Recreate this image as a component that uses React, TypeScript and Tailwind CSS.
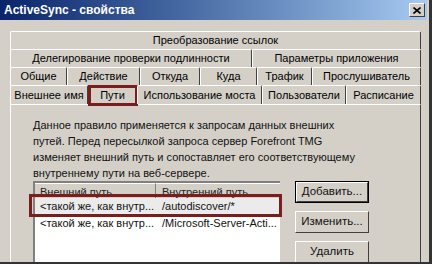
import React from 'react';

const tabRow = 'flex h-[18px] shrink-0';
const tab =
  'relative flex items-center justify-center border-t border-l border-white border-r border-r-[#404040] rounded-t-[2px] text-black whitespace-nowrap';

const Tab: React.FC<{ label: string; w?: string; marked?: boolean }> = ({ label, w, marked }) => (
  <div className={`${tab} ${w ?? 'flex-1'}`}>
    {label}
    {marked && (
      <span className="absolute left-[-1px] right-[-2px] top-[-1px] bottom-[-2px] border-[3px] border-[#7b1d1d]" />
    )}
  </div>
);

const Button: React.FC<{ label: string; primary?: boolean }> = ({ label, primary }) => (
  <div
    className={`h-[22px] w-[74px] flex items-center justify-center bg-[#d4d0c8] ${
      primary ? 'border border-black' : ''
    }`}
  >
    <div className="w-full h-full flex items-center justify-center border-t border-l border-white border-r border-b border-r-[#404040] border-b-[#404040] text-[11.5px]">
      {label}
    </div>
  </div>
);

export default function App() {
  return (
    <div className="w-[435px] h-[267px] bg-white overflow-hidden font-['Liberation_Sans',Arial,sans-serif] text-[11px] leading-none text-[#111]">
      <div className="w-[432px] h-[264px] bg-[#d4d0c8] border-r-[3px] border-b-[2px] border-[#333] flex flex-col overflow-hidden">
        {/* title bar */}
        <div className="h-[20px] mr-[2px] shrink-0 flex items-center justify-between bg-gradient-to-r from-[#0a246a] to-[#a6caf0] pl-[4px] pr-[2px]">
          <span className="text-white font-bold text-[12px]">ActiveSync - свойства</span>
          <div className="w-[16px] h-[14px] bg-[#d4d0c8] border-t border-l border-white border-r border-b border-r-[#404040] border-b-[#404040] flex items-center justify-center">
            <svg width="8" height="7" viewBox="0 0 8 7">
              <path d="M0.5 0.5 L7.5 6.5 M7.5 0.5 L0.5 6.5" stroke="black" strokeWidth="1.6" />
            </svg>
          </div>
        </div>

        {/* tabs */}
        <div className="flex flex-col pl-[10px] pr-[8px] pt-[11px] flex-1 min-h-0">
          <div className={tabRow}>
            <Tab label="Преобразование ссылок" />
          </div>
          <div className={tabRow}>
            <Tab label="Делегирование проверки подлинности" w="w-[242px]" />
            <Tab label="Параметры приложения" />
          </div>
          <div className={tabRow}>
            <Tab label="Общие" w="w-[57px]" />
            <Tab label="Действие" w="w-[73px]" />
            <Tab label="Откуда" w="w-[60px]" />
            <Tab label="Куда" w="w-[57px]" />
            <Tab label="Трафик" w="w-[55px]" />
            <Tab label="Прослушиватель" />
          </div>
          <div className={`${tabRow} h-[19px]`}>
            <Tab label="Внешнее имя" w="w-[78px]" />
            <Tab label="Пути" w="w-[49px]" marked />
            <Tab label="Использование моста" w="w-[125px]" />
            <Tab label="Пользователи" w="w-[84px]" />
            <Tab label="Расписание" />
          </div>

          {/* panel */}
          <div className="flex-1 flex flex-col border-t border-l border-white border-r border-r-[#404040] pl-[22px] pt-[12px]">
            <p className="leading-[16px] w-[328px]">
              Данное правило применяется к запросам данных внешних путей. Перед пересылкой запроса сервер Forefront TMG
              изменяет внешний путь и сопоставляет его соответствующему внутреннему пути на веб-сервере.
            </p>

            <div className="flex flex-1 gap-[15px]">
              {/* list */}
              <div className="relative w-[247px] bg-white border-t-2 border-l-2 border-t-[#808080] border-l-[#808080] whitespace-nowrap">
                <div className="flex h-[15px] bg-[#d4d0c8] text-[#222]">
                  <div className="w-[121px] pl-[5px] pt-[3px] border-r border-[#808080] border-t border-t-white">Внешний путь</div>
                  <div className="flex-1 pl-[6px] pt-[3px] border-t border-t-white">Внутренний путь</div>
                </div>
                <div className="flex h-[17px] items-center bg-[#ebebeb]">
                  <div className="w-[121px] pl-[5px]">&lt;такой же, как внутр...</div>
                  <div className="flex-1 pl-[6px]">/autodiscover/*</div>
                </div>
                <div className="flex h-[17px] items-center">
                  <div className="w-[121px] pl-[5px]">&lt;такой же, как внутр...</div>
                  <div className="flex-1 pl-[6px]">/Microsoft-Server-Acti...</div>
                </div>
                <span className="absolute left-[-6px] top-[11px] w-[253px] h-[23px] border-[3px] border-[#7b1d1d]" />
              </div>

              {/* buttons */}
              <div className="flex flex-col gap-[8px]">
                <Button label="Добавить..." primary />
                <Button label="Изменить..." />
                <Button label="Удалить" />
              </div>
            </div>
          </div>
        </div>
      </div>
    </div>
  );
}
